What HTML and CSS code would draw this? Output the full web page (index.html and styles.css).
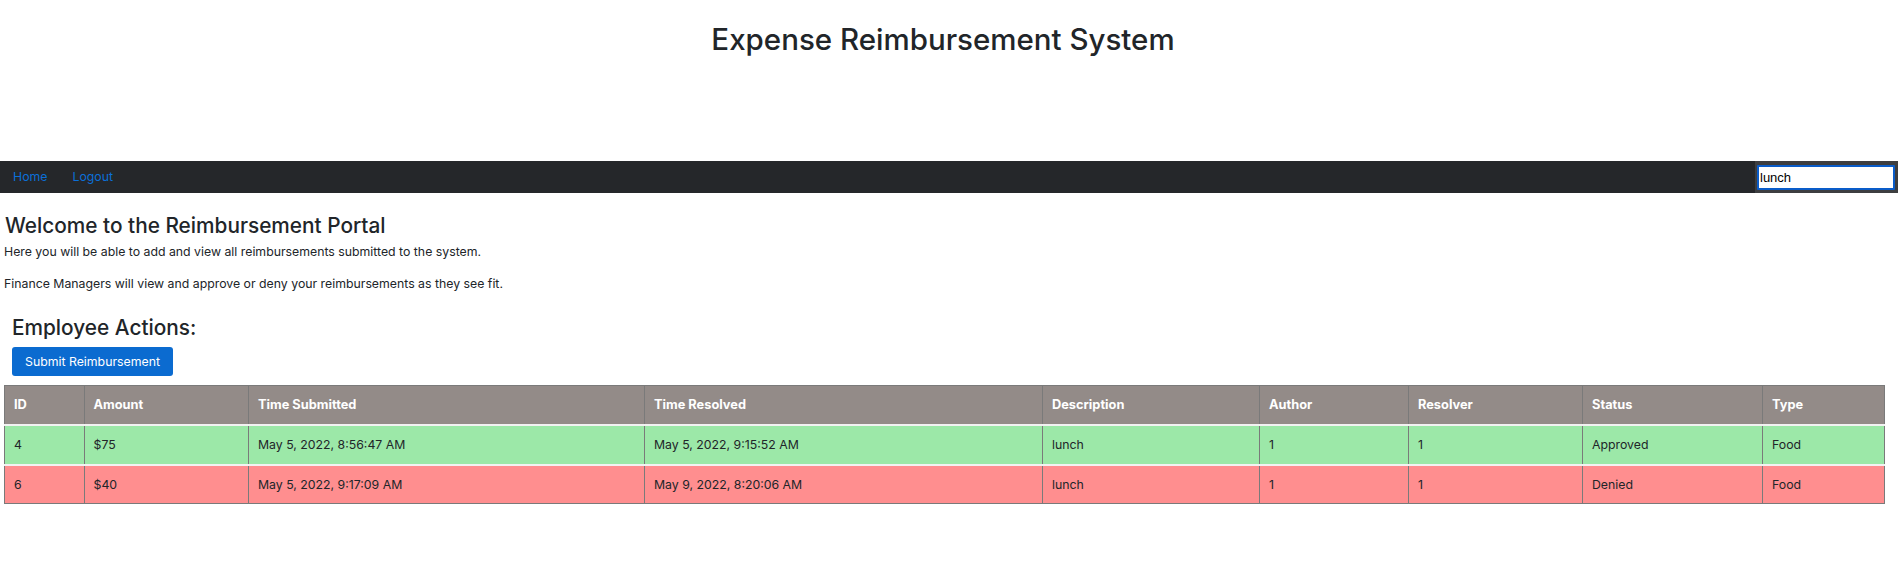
FILE: index.html
```html
<!DOCTYPE html>
<html lang="en">
<head>
<meta charset="utf-8">
<title>Expense Reimbursement System</title>
<link rel="stylesheet" href="styles.css">
</head>
<body>
<header class="banner">
  <h1 class="title">Expense Reimbursement System</h1>
</header>
<nav class="navbar">
  <div class="nav-links">
    <a href="#" class="nav-link">Home</a>
    <a href="#" class="nav-link">Logout</a>
  </div>
  <div class="search">
    <input class="search-input" type="text" value="lunch">
  </div>
</nav>
<main class="main">
  <h2 class="welcome">Welcome to the Reimbursement Portal</h2>
  <p class="intro">Here you will be able to add and view all reimbursements submitted to the system.</p>
  <p class="intro">Finance Managers will view and approve or deny your reimbursements as they see fit.</p>
  <section class="actions">
    <h3 class="actions-title">Employee Actions:</h3>
    <button class="btn-primary" type="button">Submit Reimbursement</button>
  </section>
  <table class="reimb-table">
    <colgroup>
      <col class="c-id"><col class="c-amount"><col class="c-sub"><col class="c-res"><col class="c-desc"><col class="c-author"><col class="c-resolver"><col class="c-status"><col class="c-type">
    </colgroup>
    <thead>
      <tr>
        <th>ID</th><th>Amount</th><th>Time Submitted</th><th>Time Resolved</th><th>Description</th><th>Author</th><th>Resolver</th><th>Status</th><th>Type</th>
      </tr>
    </thead>
    <tbody>
      <tr class="row-approved">
        <td>4</td><td>$75</td><td>May 5, 2022, 8:56:47 AM</td><td>May 5, 2022, 9:15:52 AM</td><td>lunch</td><td>1</td><td>1</td><td>Approved</td><td>Food</td>
      </tr>
      <tr class="row-denied">
        <td>6</td><td>$40</td><td>May 5, 2022, 9:17:09 AM</td><td>May 9, 2022, 8:20:06 AM</td><td>lunch</td><td>1</td><td>1</td><td>Denied</td><td>Food</td>
      </tr>
    </tbody>
  </table>
</main>
</body>
</html>
```
FILE: styles.css
```css
* { box-sizing: border-box; }
html, body { margin: 0; padding: 0; background: #fff; }
body {
  font-family: Inter, "Liberation Sans", Arial, sans-serif;
  font-size: 12.3px;
  line-height: 1.56;
  color: #212529;
}
.banner {
  height: 161px;
  padding: 22px 12px 0 0;
}
.title {
  margin: 0;
  text-align: center;
  font-size: 29.5px;
  font-weight: 500;
  line-height: 1.2;
  color: #212529;
}
.navbar {
  display: flex;
  justify-content: space-between;
  align-items: stretch;
  height: 32px;
  background: #25272a;
}
.nav-links {
  display: flex;
  align-items: center;
  gap: 25px;
  padding-left: 13px;
}
.nav-link {
  color: #0b6fd8;
  text-decoration: none;
  font-size: 12.3px;
}
.search {
  display: flex;
  align-items: center;
  background: #3d3e40;
  padding: 0 3px 0 2px;
}
.search-input {
  width: 138px;
  height: 25px;
  border: 2px solid #0a5cc9;
  border-radius: 1px;
  background: #fff;
  padding: 0 1px;
  font-family: "Liberation Sans", Arial, sans-serif;
  font-size: 13px;
  color: #000;
  outline: none;
}
.main {
  padding: 19px 4px 0 4px;
}
.welcome {
  margin: 0 0 3px 1px;
  font-size: 20.8px;
  font-weight: 500;
  line-height: 1.3;
}
.intro {
  margin: 0 0 12.8px 0;
}
.actions {
  padding: 8px 8px 0 8px;
}
.actions-title {
  margin: 0 0 6.4px 0;
  font-size: 20.8px;
  font-weight: 500;
  line-height: 1.3;
}
.btn-primary {
  display: block;
  width: 161px;
  height: 29px;
  padding: 0;
  border: 0;
  border-radius: 3px;
  background: #0b6bd0;
  color: #fff;
  font-family: inherit;
  font-size: 12.3px;
}
.reimb-table {
  margin-top: 9px;
  width: 1880px;
  table-layout: fixed;
  border-collapse: collapse;
  border: 1px solid #7a7a7a;
}
.c-id { width: 79.5px; }
.c-amount { width: 164.5px; }
.c-sub { width: 396px; }
.c-res { width: 398px; }
.c-desc { width: 217px; }
.c-author { width: 149px; }
.c-resolver { width: 174px; }
.c-status { width: 180px; }
.c-type { width: 122px; }
.reimb-table th,
.reimb-table td {
  text-align: left;
  padding: 9px 9px;
  height: 38.5px;
  border-left: 1px solid #7a7a7a;
  border-right: 1px solid #7a7a7a;
  border-bottom: 2px solid #f2f2f2;
  vertical-align: middle;
}
.reimb-table thead th {
  background: #938b88;
  color: #fff;
  font-weight: 700;
  font-size: 12.8px;
}
.reimb-table tbody tr:last-child td { border-bottom: 1px solid #7a7a7a; }
.row-approved td { background: #9ce8a8; }
.row-denied td { background: #ff8e8f; }
```
